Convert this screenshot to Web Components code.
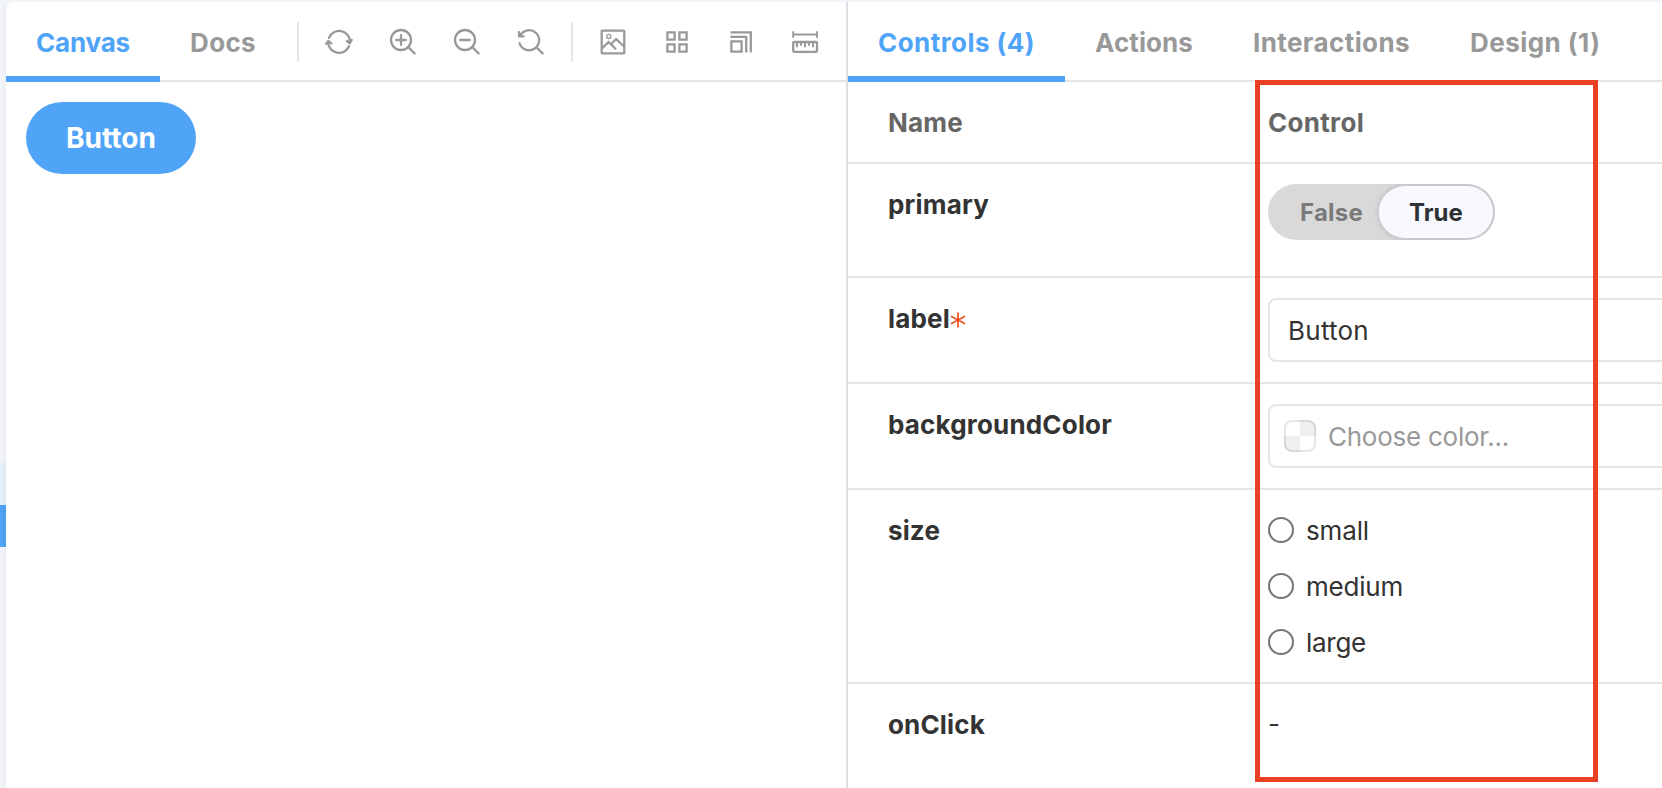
<!DOCTYPE html>
<html lang="en">
<head>
<meta charset="utf-8">
<title>Storybook</title>
<style>
html,body{margin:0;height:100%;overflow:hidden}
body{font-family:Inter,"Liberation Sans",sans-serif;background:#f1f4f9}
</style>
</head>
<body>
<sb-app>
  <sb-bar slot="canvas-bar">
    <sb-tab active><sb-text w="94">Canvas</sb-text></sb-tab>
    <sb-tab><sb-text w="66">Docs</sb-text></sb-tab>
    <sb-tools></sb-tools>
  </sb-bar>
  <sb-button slot="story"><sb-text w="90">Button</sb-text></sb-button>
  <sb-bar slot="addon-bar">
    <sb-tab active><sb-text w="157">Controls (4)</sb-text></sb-tab>
    <sb-tab><sb-text w="98">Actions</sb-text></sb-tab>
    <sb-tab><sb-text w="157">Interactions</sb-text></sb-tab>
    <sb-tab><sb-text w="130">Design (1)</sb-text></sb-tab>
  </sb-bar>
  <sb-row slot="rows" head style="--h:80px"><sb-text slot="name" w="75">Name</sb-text><sb-text w="96">Control</sb-text></sb-row>
  <sb-row slot="rows" style="--h:112px"><sb-text slot="name" w="101">primary</sb-text><sb-toggle></sb-toggle></sb-row>
  <sb-row slot="rows" required style="--h:104px"><sb-text slot="name" w="62">label</sb-text><sb-input><sb-text w="81">Button</sb-text></sb-input></sb-row>
  <sb-row slot="rows" style="--h:104px"><sb-text slot="name" w="224">backgroundColor</sb-text><sb-input color><sb-text w="181">Choose color...</sb-text></sb-input></sb-row>
  <sb-row slot="rows" style="--h:192px"><sb-text slot="name" w="52">size</sb-text>
    <sb-radio><sb-text w="63">small</sb-text></sb-radio>
    <sb-radio><sb-text w="97">medium</sb-text></sb-radio>
    <sb-radio><sb-text w="60">large</sb-text></sb-radio>
  </sb-row>
  <sb-row slot="rows" style="--h:112px"><sb-text slot="name" w="97">onClick</sb-text><sb-dash>-</sb-dash></sb-row>
</sb-app>
<script>
const define = (name, html, setup) => customElements.define(name, class extends HTMLElement {
  connectedCallback() {
    if (this.shadowRoot) return;
    this.attachShadow({ mode: 'open' }).innerHTML = html;
    if (setup) setup(this);
  }
});

define('sb-app', `<style>
:host{display:grid;grid-template-columns:6px 840px 2px 1fr;width:100vw;height:100vh;overflow:hidden;box-sizing:border-box;padding-top:2px;position:relative;background:#f1f4f9}
.side{display:flex;flex-direction:column;background:linear-gradient(90deg,#f3f5fa,#eceff4)}
.side i{height:42px}
.side .hover{margin-top:461px;background:linear-gradient(90deg,#e7f0f9,#e0e9f1)}
.side .sel{background:linear-gradient(90deg,#50a4f7,#4c9cec)}
.canvas{background:#fff;border-top-left-radius:8px}
.story{padding:20px}
.split{background:#dcdfe3}
.panel{background:#fff;min-width:0;overflow:hidden}
.mark{position:absolute;left:1255px;top:80px;width:343px;height:702px;box-sizing:border-box;border:5px solid #e93f25}
</style>
<div class="side"><i class="hover"></i><i class="sel"></i></div>
<section class="canvas"><slot name="canvas-bar"></slot><div class="story"><slot name="story"></slot></div></section>
<div class="split"></div>
<section class="panel"><slot name="addon-bar"></slot><slot name="rows"></slot></section>
<div class="mark"></div>`);

define('sb-bar', `<style>:host{display:flex;height:80px;box-shadow:inset 0 -2px #e5e5e5}</style><slot></slot>`);

define('sb-tab', `<style>
:host{display:flex;box-sizing:border-box;height:80px;padding:0 30px;align-items:center;font-size:26px;font-weight:700;color:#999;border-bottom:6px solid transparent;border-top:7px solid transparent}
:host([active]){color:#4fa4f7;border-bottom-color:#4fa4f7}
</style><slot></slot>`);

/* Tracks its text so that the run takes up the advance given in w. */
define('sb-text', `<style>:host{display:inline-block;white-space:nowrap}span{display:inline-block}</style><span><slot></slot></span>`, el => {
  const span = el.shadowRoot.querySelector('span');
  const target = +el.getAttribute('w');
  const fit = () => {
    const n = el.textContent.length;
    span.style.letterSpacing = '0px';
    span.style.letterSpacing = (target - span.getBoundingClientRect().width) / n + 'px';
    el.style.width = target + 'px';
  };
  queueMicrotask(fit);
});

define('sb-tools', `<style>
:host{display:flex;align-items:flex-start;padding:20px 0 0 11px}
i{width:2px;height:40px;background:#e5e5e5;margin:0 8px}
i:first-of-type{margin-left:0}
b{width:64px;display:flex;justify-content:center;padding-top:6px}
svg{width:28px;height:28px;fill:none;stroke:#999;stroke-width:2.3;stroke-linecap:round;stroke-linejoin:round}
</style>
<i></i>
<b><svg viewBox="325 28 28 28"><path d="M329 37.8A10.8 10.8 0 0 1 349.9 42M349 46.2A10.8 10.8 0 0 1 328.2 42M346.9 41L349.9 43.2L351.7 39.9M326.2 43.8L328.3 41L331.4 43.3"/></svg></b>
<b><svg viewBox="389 28 28 28"><circle cx="401" cy="40" r="10"/><path d="M396.2 40h9.6M401 35.2v9.6M408.4 47.3L414.6 53.4"/></svg></b>
<b><svg viewBox="453 28 28 28"><circle cx="465" cy="40" r="10"/><path d="M460.2 40h9.6M472.4 47.3L478.6 53.4"/></svg></b>
<b><svg viewBox="517 28 28 28"><path d="M519.6 43.3A10 10 0 1 0 520.4 35.3M519 32.2V36.3H523.6M519 36.3L522 33M536.4 47.3L542.6 53.4"/></svg></b>
<i></i>
<b><svg viewBox="599 28 28 28"><g stroke-linecap="butt" stroke-linejoin="miter"><rect x="601.7" y="30.7" width="22.6" height="22.6" rx=".5"/><path d="M602 48.4L608.6 42L616 49.3M611.8 43.5L616.2 39L624.5 47"/><circle cx="608.8" cy="36.4" r="2.1" stroke-width="1.3"/></g></svg></b>
<b><svg viewBox="663 28 28 28"><path stroke-linejoin="miter" d="M667.4 32.4h7.2v7.2h-7.2zM679.4 32.4h7.2v7.2h-7.2zM667.4 44.4h7.2v7.2h-7.2zM679.4 44.4h7.2v7.2h-7.2z"/></svg></b>
<b><svg viewBox="727 28 28 28"><path stroke-linejoin="miter" stroke-linecap="butt" d="M731.4 41.4h10.2v10.2h-10.2zM730.4 36.9H746.2V52.6M730.4 32.4H750.8V52.6"/></svg></b>
<b><svg viewBox="791 28 28 28"><rect x="793.2" y="42" width="23.8" height="9.8" rx="1"/><path d="M793.2 32v5M817 32v5M793.2 34.5H817M797 43v3.6M805 43v3.6M813 43v3.6M801 43v2M809 43v2" stroke-width="2"/></svg></b>`);

define('sb-button', `<style>
:host{display:flex;width:170px;height:72px;border-radius:36px;background:#50a4f7;color:#fff;font-size:28px;font-weight:700;align-items:center;justify-content:center}
</style><slot></slot>`);

define('sb-row', `<style>
:host{display:grid;grid-template-columns:380px 1fr;height:var(--h);padding:0 0 0 40px;border-bottom:2px solid #e5e5e5;font-size:26px;line-height:40px;color:#333}
.name{padding-top:21px;font-weight:700;display:flex;align-items:flex-start}
.value{padding-top:20px;display:flex;flex-direction:column;align-items:flex-start;min-width:0}
:host([head]){color:#666;font-weight:700}
:host([head]) .value{padding-top:21px}
svg{display:none;width:16px;height:16px;margin:13px 0 0 0;fill:none;stroke:#f2562a;stroke-width:1.8}
:host([required]) svg{display:block}
</style>
<div class="name"><slot name="name"></slot><svg viewBox="0 0 16 16"><path d="M8 .6v14.8M1 4.3l14 7.4M15 4.3L1 11.7"/></svg></div>
<div class="value"><slot></slot></div>`);

define('sb-toggle', `<style>
:host{display:flex;width:227px;height:56px;border-radius:28px;background:#d9d9d9;font-size:24px;font-weight:700;line-height:58px;overflow:hidden}
.off{width:109px;padding-left:32px;box-sizing:border-box;color:#7a7a7a}
.on{width:118px;box-sizing:border-box;padding-left:30px;height:56px;line-height:54px;border:2px solid #c9c9ca;border-left-color:#cfcfcf;border-radius:28px;background:#f7f9fe;color:#2e3134;box-shadow:0 0 4px rgba(0,0,0,.1)}
</style><div class="off"><sb-text w="63">False</sb-text></div><div class="on"><sb-text w="54">True</sb-text></div>`);

define('sb-input', `<style>
:host{display:flex;box-sizing:border-box;width:430px;height:64px;border:2px solid #e5e5e5;border-radius:8px;padding-left:18px;align-items:center;background:#fff;color:#333;line-height:60px}
:host([color]){padding-left:14px;color:#999}
slot{display:block;padding-top:2px}
i{display:none;width:32px;height:32px;margin-right:12px;border-radius:8px;box-shadow:inset 0 0 0 2px rgba(0,0,0,.1);background:conic-gradient(#f0f0f0 25%,#fff 0 50%,#f0f0f0 0 75%,#fff 0)}
:host([color]) i{display:block}
</style><i></i><slot></slot>`);

define('sb-radio', `<style>
:host{display:flex;height:40px;margin-bottom:16px;align-items:flex-start}
slot{display:block;padding-top:1px}
i{width:26px;height:26px;box-sizing:border-box;border:2px solid #767676;border-radius:50%;margin:7px 12px 0 0;background:#fff}
</style><i></i><slot></slot>`);

define('sb-dash', `<style>:host{display:block;line-height:40px}</style><slot></slot>`);
</script>
</body>
</html>
